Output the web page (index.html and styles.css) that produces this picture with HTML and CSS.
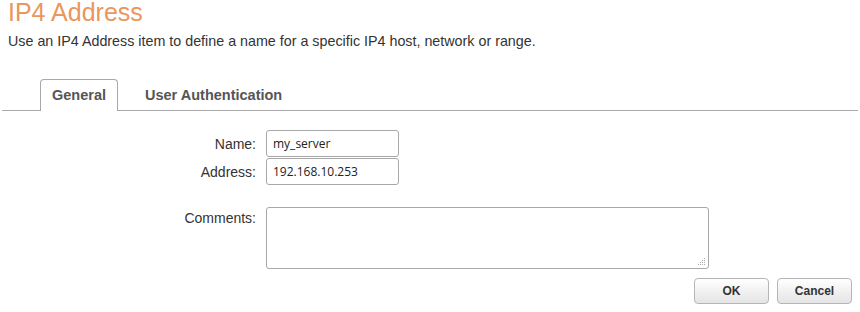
FILE: index.html
```html
<!DOCTYPE html>
<html lang="en">
<head>
    <meta charset="UTF-8">
    <title>IP4 Address</title>
    <link rel="stylesheet" href="styles.css">
</head>
<body>
    <h1 class="page-title">IP4 Address</h1>
    <p class="intro">Use an IP4 Address item to define a name for a specific IP4 host, network or range.</p>

    <div class="tabs">
        <div class="tab active">General</div>
        <div class="tab">User Authentication</div>
    </div>

    <form class="item-form">
        <label for="name">Name:</label>
        <input type="text" id="name" class="field" value="my_server">

        <label for="address">Address:</label>
        <input type="text" id="address" class="field" value="192.168.10.253">

        <label for="comments" class="label-top">Comments:</label>
        <div class="comments-wrap">
            <textarea id="comments" class="comments"></textarea>
            <svg class="grip" width="8" height="8" viewBox="0 0 8 8">
                <rect x="6" y="0" width="1" height="1"/>
                <rect x="4" y="2" width="1" height="1"/>
                <rect x="6" y="2" width="1" height="1"/>
                <rect x="2" y="4" width="1" height="1"/>
                <rect x="4" y="4" width="1" height="1"/>
                <rect x="6" y="4" width="1" height="1"/>
                <rect x="0" y="6" width="1" height="1"/>
                <rect x="2" y="6" width="1" height="1"/>
                <rect x="4" y="6" width="1" height="1"/>
                <rect x="6" y="6" width="1" height="1"/>
            </svg>
        </div>
    </form>

    <div class="actions">
        <button type="button" class="btn">OK</button>
        <button type="button" class="btn">Cancel</button>
    </div>
</body>
</html>
```

FILE: styles.css
```css
body {
    margin: 0;
    font-family: "Liberation Sans", Arial, sans-serif;
    font-size: 14px;
    color: #333;
    background: #fff;
}
.page-title {
    margin: -2px 0 0;
    padding-left: 8px;
    font-size: 25px;
    line-height: 28px;
    font-weight: normal;
    color: #ea965c;
}
.intro {
    margin: 7px 0 0 8px;
    font-size: 14.3px;
    line-height: 16px;
}
.tabs {
    display: flex;
    align-items: flex-end;
    margin: 30px 2px 0;
    padding-left: 38px;
    border-bottom: 1px solid #a8a8a8;
    height: 31px;
}
.tab {
    padding: 0 11px;
    height: 30px;
    line-height: 30px;
    font-size: 14.5px;
    font-weight: bold;
    color: #555;
    margin-right: 16px;
}
.tab.active {
    background: #fff;
    border: 1px solid #a8a8a8;
    border-bottom: none;
    border-radius: 4px 4px 0 0;
    height: 31px;
    margin-bottom: -1px;
    line-height: 31px;
}
.item-form {
    display: grid;
    grid-template-columns: 256px auto;
    column-gap: 10px;
    row-gap: 1px;
    margin-top: 19px;
    justify-items: start;
}
.item-form label {
    justify-self: end;
    align-self: center;
    color: #333;
}
.item-form .label-top {
    align-self: start;
    margin-top: 24px;
}
.field {
    box-sizing: border-box;
    width: 133px;
    height: 27px;
    padding: 0 6px;
    border: 1px solid #a8a8a8;
    border-radius: 3px;
    font-family: "Open Sans", sans-serif;
    font-size: 12px;
    color: #222;
}
.comments-wrap {
    position: relative;
    margin-top: 21px;
    height: 62px;
}
.comments {
    display: block;
    box-sizing: border-box;
    width: 443px;
    height: 62px;
    border: 1px solid #a8a8a8;
    border-radius: 3px;
    font-family: "Open Sans", sans-serif;
    font-size: 12px;
    resize: none;
}
.grip {
    position: absolute;
    right: 3px;
    bottom: 3px;
    fill: #aaa;
}
.actions {
    display: flex;
    justify-content: flex-end;
    gap: 8px;
    margin-top: 9px;
    padding-right: 8px;
}
.btn {
    width: 75px;
    height: 26px;
    border: 1px solid #b5b5b5;
    border-radius: 4px;
    background: linear-gradient(#ffffff, #e4e4e4);
    font-family: "Liberation Sans", Arial, sans-serif;
    font-size: 12px;
    font-weight: bold;
    color: #333;
}
```
